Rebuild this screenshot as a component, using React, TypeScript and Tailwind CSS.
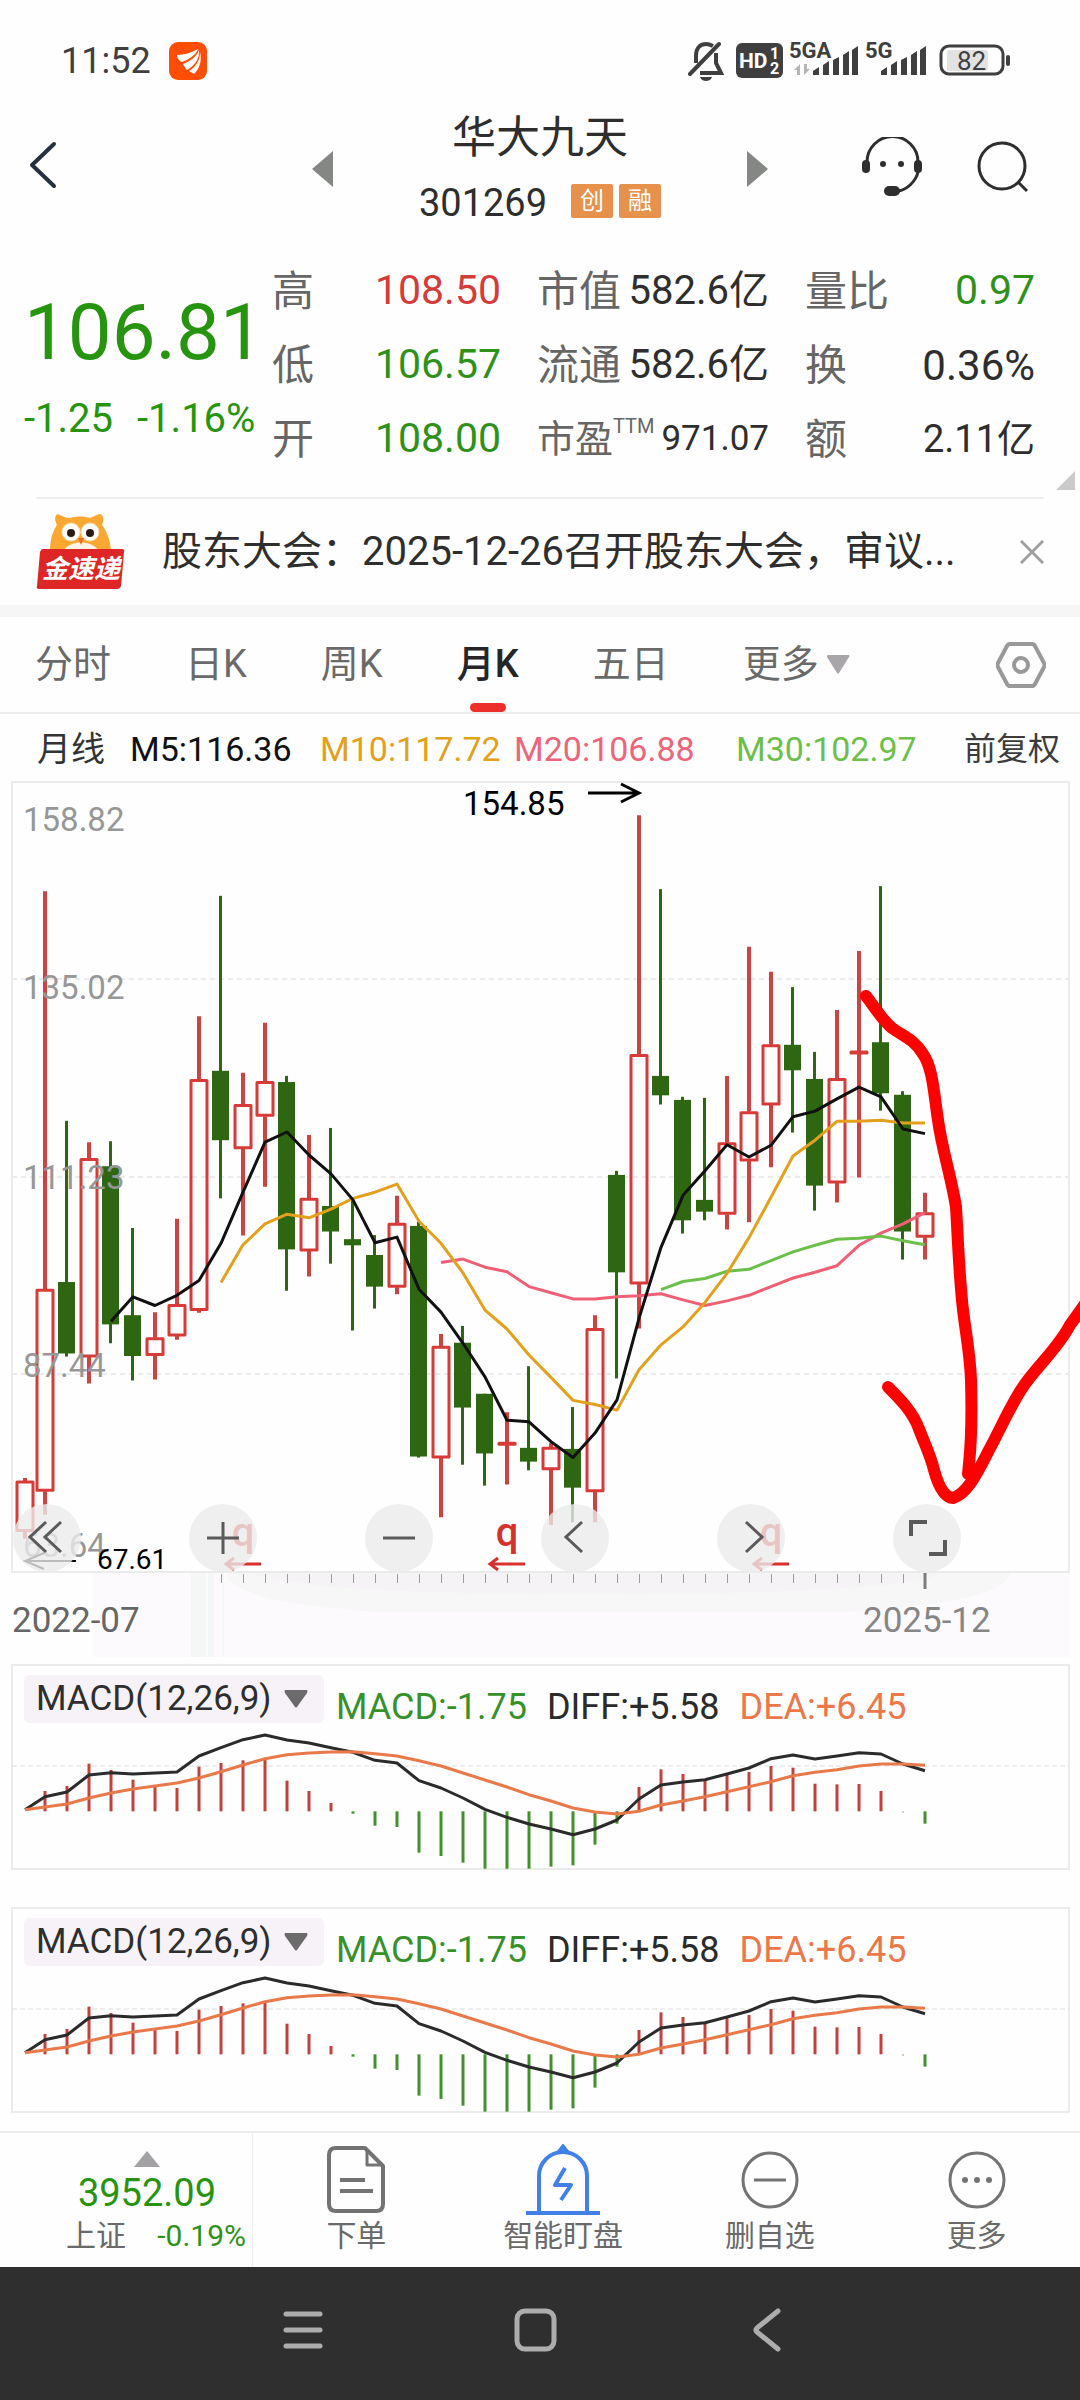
import React from "react";

type Candle = [up: boolean, high: number, top: number, bottom: number, low: number];

/* Candle values are in plot units; PLOT_SCALE turns them into view-box pixels. */
const PLOT_SCALE = 0.5102;

const candles: Candle[] = [
  [true, 1368, 1374, 1473, 1487],
  [true, 218, 998, 1394, 1440],
  [false, 668, 984, 1124, 1130],
  [true, 710, 742, 1131, 1183],
  [false, 708, 757, 1067, 1104],
  [false, 878, 1049, 1129, 1177],
  [true, 1043, 1093, 1128, 1175],
  [true, 860, 1028, 1090, 1097],
  [true, 463, 587, 1040, 1044],
  [false, 227, 570, 706, 820],
  [true, 574, 636, 723, 893],
  [true, 476, 591, 659, 797],
  [false, 580, 592, 920, 1001],
  [true, 696, 820, 923, 973],
  [false, 682, 835, 885, 948],
  [false, 820, 900, 912, 1079],
  [false, 892, 931, 993, 1036],
  [true, 815, 869, 994, 1008],
  [false, 866, 874, 1326, 1328],
  [true, 1086, 1110, 1329, 1445],
  [false, 1070, 1103, 1230, 1342],
  [false, 1203, 1203, 1320, 1383],
  [true, 1239, 1298, 1300, 1381],
  [false, 1149, 1309, 1336, 1353],
  [true, 1300, 1308, 1352, 1460],
  [false, 1229, 1311, 1387, 1455],
  [true, 1049, 1075, 1395, 1455],
  [false, 766, 774, 965, 1173],
  [true, 69, 538, 988, 1075],
  [false, 214, 580, 618, 636],
  [false, 621, 627, 863, 889],
  [false, 623, 823, 846, 863],
  [true, 580, 711, 851, 881],
  [true, 327, 650, 747, 867],
  [true, 376, 519, 637, 759],
  [false, 406, 519, 569, 691],
  [false, 533, 586, 795, 844],
  [true, 451, 585, 790, 828],
  [true, 335, 531, 537, 779],
  [false, 208, 514, 614, 648],
  [false, 610, 617, 885, 940],
  [true, 809, 848, 896, 940],
];

const averages = [
  {
    color: "#ef6076",
    start: 19,
    values: [946, 939, 955, 964, 993, 1005, 1017, 1017, 1013, 1011, 1007, 1019, 1030, 1021, 1010, 993, 976, 965, 952, 912, 888, 870, 848],
  },
  {
    color: "#6cbf4b",
    start: 29,
    values: [999, 983, 977, 963, 959, 942, 925, 912, 900, 898, 894, 903, 911],
  },
  {
    color: "#e2a01c",
    start: 9,
    values: [985, 911, 870, 851, 858, 841, 820, 808, 792, 865, 908, 966, 1039, 1076, 1127, 1171, 1216, 1224, 1235, 1156, 1107, 1072, 1024, 967, 897, 818, 737, 706, 669, 669, 667, 672, 672],
  },
  {
    color: "#111111",
    start: 4,
    values: [1061, 1013, 1030, 1010, 981, 908, 808, 710, 690, 735, 772, 823, 907, 896, 998, 1043, 1104, 1170, 1255, 1258, 1297, 1328, 1280, 1215, 1055, 916, 814, 766, 715, 739, 716, 660, 649, 625, 602, 621, 684, 693],
  },
];

const macdBars = [
  484, 423, 408, 341, 360, 389, 408, 414, 350, 339, 331, 330, 392, 423, 459, 491, 527, 531, 608, 618, 638, 656, 656, 656, 650, 646, 584, 521, 411, 358, 372, 390, 375, 366, 348, 353, 401, 403, 402, 423, 488, 521,
];
const diffLine = [
  479, 440, 426, 375, 368, 372, 369, 366, 318, 293, 269, 255, 270, 279, 293, 307, 331, 339, 392, 414, 444, 478, 502, 522, 537, 554, 537, 510, 447, 405, 396, 389, 372, 354, 326, 315, 327, 318, 308, 312, 342, 362,
];
const deaLine = [
  479, 471, 462, 444, 429, 417, 408, 399, 384, 365, 345, 326, 314, 309, 306, 305, 311, 318, 332, 348, 369, 390, 411, 434, 453, 474, 486, 492, 484, 465, 453, 440, 425, 410, 395, 377, 367, 359, 348, 342, 342, 346,
];

const slotX = (i: number) => (i === 0 ? 25 : 23 + 22 * i);
const plotY = (v: number) => v * PLOT_SCALE;
const macdY = (v: number) => v / 3 - 7;

function linePoints(values: number[], start: number, scale: (v: number) => number) {
  return values.map((v, i) => `${slotX(start + i)},${scale(v).toFixed(1)}`).join(" ");
}

function SignalBars() {
  return (
    <>
      <path d="M0 29v-4l6-4v8z" />
      <path d="M10 29v-10l6-4v14z" />
      <path d="M20 29v-15l6-3v18z" />
      <path d="M30 29v-20l6-4v24z" />
      <path d="M39 29v-25l6-4v29z" />
    </>
  );
}

function StatusBar() {
  return (
    <div className="flex items-center justify-between pt-[34px] pr-[68px] pl-[61px] text-[#3f3f3f]">
      <div className="flex items-center gap-[18px]">
        <span className="text-[36px] leading-10">11:52</span>
        <svg width="38" height="38" viewBox="0 0 38 38" aria-hidden="true">
          <rect width="38" height="38" rx="9" fill="#ff4d05" />
          <path d="M8 13C15 13 24 10 29 7C27 13 19 18 13 20C10 19 8 16 8 13z" fill="#fff" />
          <path d="M14 22C22 19 28 14 30 8C31 17 25 24 18 28C16 26 15 24 14 22z" fill="#fff" />
          <path d="M20 29C27 25 31 18 31 10C33 18 31 26 25 32z" fill="#fff" />
        </svg>
      </div>
      <svg width="324" height="54" viewBox="688 33 324 54" fill="#3f3f3f" fontFamily="Roboto, sans-serif" aria-hidden="true">
        <g fill="none" stroke="#3f3f3f" strokeWidth="4">
          <path d="M690 73L719 43" strokeLinecap="round" />
          <path d="M696 62V55C696 46 701 43 706 43C709 43 711 44 713 45" />
          <path d="M716 52V62L721 72H700" />
        </g>
        <path d="M700 76h12c-1 3-4 4-6 4s-5-1-6-4z" />
        <rect x="736" y="42" width="47" height="35" rx="6" />
        <text x="739" y="67" fontSize="21" fontWeight="700" fill="#fff">HD</text>
        <text x="770" y="58" fontSize="16" fontWeight="700" fill="#fff">1</text>
        <text x="770" y="73" fontSize="16" fontWeight="700" fill="#fff">2</text>
        <text x="789" y="57" fontSize="22" fontWeight="700">5GA</text>
        <g fill="#b5b5b5">
          <path d="M794 69l6-6v11h-3v-5z" />
          <path d="M804 63v11l6-6h-3v-5z" />
        </g>
        <g transform="translate(813 45)"><SignalBars /></g>
        <text x="865" y="57" fontSize="22" fontWeight="700">5G</text>
        <g transform="translate(881 45)"><SignalBars /></g>
        <rect x="941" y="45" width="62" height="28" rx="8" fill="none" stroke="#3f3f3f" strokeWidth="3" />
        <rect x="947" y="49" width="41" height="21" rx="3" fill="#e2e2e2" />
        <rect x="1006" y="54" width="4" height="11" rx="2" />
        <text x="957" y="69" fontSize="26">82</text>
      </svg>
    </div>
  );
}

function Header() {
  return (
    <header className="grid grid-cols-[1fr_456px_1fr] items-center pt-[22px] text-[#2e2e2e]">
      <div className="flex pl-7">
        <button type="button" aria-label="返回" className="pb-2">
          <svg width="30" height="48" viewBox="0 0 30 48" fill="none" stroke="#26303f" strokeWidth="4">
            <path d="M26 3L4 24L26 45" strokeLinecap="round" strokeLinejoin="round" />
          </svg>
        </button>
      </div>
      <div className="flex items-center justify-between">
        <button type="button" aria-label="上一只">
          <svg width="21" height="36" viewBox="0 0 21 36"><path d="M21 0V36L0 18z" fill="#848783" /></svg>
        </button>
        <div className="flex flex-col items-center gap-3">
          <h1 className="text-[44px] leading-[56px]">华大九天</h1>
          <div className="flex items-center gap-6">
            <span className="text-[38px] leading-[50px]">301269</span>
            <span className="flex gap-[6px] pb-1 text-[24px] leading-[34px] text-white">
              <span className="rounded-xs bg-[#e6914c] px-[9px]">创</span>
              <span className="rounded-xs bg-[#e6914c] px-[9px]">融</span>
            </span>
          </div>
        </div>
        <button type="button" aria-label="下一只">
          <svg width="21" height="36" viewBox="0 0 21 36"><path d="M0 0V36L21 18z" fill="#848783" /></svg>
        </button>
      </div>
      <div className="flex items-center justify-end gap-[54px] pr-[51px] pb-1">
        <button type="button" aria-label="客服">
          <svg width="62" height="60" viewBox="861 137 62 60" fill="#2e2e2e">
            <path d="M867 162A25 25 0 0 1 918 162V172C916 181 907 190 898 191" fill="none" stroke="#2e2e2e" strokeWidth="3" />
            <rect x="862" y="160" width="8" height="13" rx="4" />
            <rect x="914" y="160" width="8" height="13" rx="4" />
            <circle cx="883" cy="164" r="3" />
            <circle cx="901" cy="164" r="3" />
            <rect x="884" y="186" width="16" height="10" rx="5" />
          </svg>
        </button>
        <button type="button" aria-label="搜索">
          <svg width="52" height="52" viewBox="976 140 52 52" fill="none" stroke="#2e2e2e" strokeWidth="3">
            <circle cx="1001" cy="165" r="23" />
            <path d="M1017 181L1026 190" />
          </svg>
        </button>
      </div>
    </header>
  );
}

function Stat({ label, value, tone }: { label: React.ReactNode; value: string; tone: string }) {
  return (
    <div className="flex h-[74px] items-center justify-between whitespace-nowrap">
      <dt className="text-[42px] text-[#666666]">{label}</dt>
      <dd className={tone}>{value}</dd>
    </div>
  );
}

function Quote() {
  return (
    <section className="relative pt-[26px] pb-[21px]">
      <div className="grid grid-cols-[248fr_265fr_268fr_230fr] pr-[45px] pl-6">
        <div className="flex min-w-0 flex-col justify-center gap-2 whitespace-nowrap text-[#279410]">
          <p className="text-[78px] leading-[100px]">106.81</p>
          <p className="flex gap-[24px] text-[40px] leading-[56px]">
            <span>-1.25</span>
            <span>-1.16%</span>
          </p>
        </div>
        <dl className="pr-9">
          <Stat label="高" value="108.50" tone="text-[41px] text-[#d43c39]" />
          <Stat label="低" value="106.57" tone="text-[41px] text-[#2f901a]" />
          <Stat label="开" value="108.00" tone="text-[41px] text-[#2f901a]" />
        </dl>
        <dl className="pr-9">
          <Stat label="市值" value="582.6亿" tone="text-[40px] text-[#2e2e2e]" />
          <Stat label="流通" value="582.6亿" tone="text-[40px] text-[#2e2e2e]" />
          <Stat
            label={<span className="flex text-[38px]">市盈<span className="text-[20px]">TTM</span></span>}
            value="971.07"
            tone="text-[35px] text-[#2e2e2e]"
          />
        </dl>
        <dl>
          <Stat label="量比" value="0.97" tone="text-[41px] text-[#2f901a]" />
          <Stat label="换" value="0.36%" tone="text-[42px] text-[#2e2e2e]" />
          <Stat label="额" value="2.11亿" tone="text-[38px] text-[#2e2e2e]" />
        </dl>
      </div>
      <svg className="absolute right-[5px] bottom-[7px]" width="19" height="19" viewBox="0 0 19 19" aria-hidden="true">
        <path d="M19 0V19H0z" fill="#cbcbcb" />
      </svg>
    </section>
  );
}

function News() {
  return (
    <section className="mx-9 flex h-[108px] items-center border-t-2 border-[#efefef]">
      <svg className="shrink-0" width="90" height="80" viewBox="36 512 90 80" aria-hidden="true">
        <path d="M50 553C50 535 55 528 57 525C54 519 55 515 58 514C62 516 66 518 70 518C76 516 85 516 90 518C95 516 98 514 101 514C104 517 104 521 102 525C106 530 111 540 111 553z" fill="#fba833" />
        <path d="M64 550C70 540 92 540 98 550z" fill="#fdf4e6" />
        <circle cx="71" cy="532" r="9" fill="#fff" stroke="#f5dcae" strokeWidth="1" />
        <circle cx="90" cy="532" r="9" fill="#fff" stroke="#f5dcae" strokeWidth="1" />
        <circle cx="71" cy="533" r="4" fill="#2b1a12" />
        <circle cx="90" cy="533" r="4" fill="#2b1a12" />
        <path d="M78 538L81 545L84 538z" fill="#e9722a" />
        <path d="M43 549H122Q125 549 124 552L121 586Q120 589 117 589H39Q36 589 37 586L40 552Q41 549 43 549z" fill="#de2626" />
        <text x="42" y="578" fontSize="26" fontWeight="700" fontStyle="italic" fill="#fff" fontFamily="'Noto Sans CJK SC', sans-serif">金速递</text>
      </svg>
      <p className="ml-9 min-w-0 flex-1 truncate text-[40px] text-[#2e2e2e]">股东大会：2025-12-26召开股东大会，审议...</p>
      <button type="button" aria-label="关闭">
        <svg width="24" height="24" viewBox="0 0 24 24" stroke="#a0a0a0" strokeWidth="3"><path d="M1 1L23 23M23 1L1 23" /></svg>
      </button>
    </section>
  );
}

function Tabs() {
  const tabs = ["分时", "日K", "周K", "月K", "五日"];
  return (
    <nav className="flex h-[97px] items-stretch justify-between border-b-2 border-[#ececec] pr-[34px] pl-[35px] text-[38px] text-[#6a6a6a]">
      <div className="flex gap-[74px]">
        {tabs.map((t) => (
          <button
            key={t}
            type="button"
            className={t === "月K" ? "relative font-medium whitespace-nowrap text-[#262626]" : "whitespace-nowrap"}
          >
            {t}
            {t === "月K" && <span className="absolute bottom-0 left-1/2 h-[9px] w-9 -translate-x-1/2 rounded-full bg-[#ed2f2b]" />}
          </button>
        ))}
        <button type="button" className="flex items-center gap-2 whitespace-nowrap">
          更多
          <svg width="23" height="19" viewBox="0 0 23 19"><path d="M1 0H22Q23 1 22 2L12 18Q11 19 10 18L0 2Q0 0 1 0z" fill="#a8a6a8" /></svg>
        </button>
      </div>
      <button type="button" aria-label="设置">
        <svg width="50" height="46" viewBox="0 0 50 46" fill="none" stroke="#999999" strokeWidth="4">
          <path d="M14 2H36Q38 2 39 4L48 21Q49 23 48 25L39 42Q38 44 36 44H14Q12 44 11 42L2 25Q1 23 2 21L11 4Q12 2 14 2z" />
          <circle cx="25" cy="23" r="7" />
        </svg>
      </button>
    </nav>
  );
}

function AverageLegend() {
  return (
    <div className="flex h-[66px] items-center pt-1 pr-5 pl-[37px] text-[34px] whitespace-nowrap">
      <span className="w-[93px] text-[#333333]">月线</span>
      <span className="w-[190px] text-[#111111]">M5:116.36</span>
      <span className="w-[194px] text-[#e2a01c]">M10:117.72</span>
      <span className="w-[222px] text-[#ec657b]">M20:106.88</span>
      <span className="text-[#6cbf4b]">M30:102.97</span>
      <button type="button" className="ml-auto text-[32px] text-[#3c3c3c]">前复权</button>
    </div>
  );
}

const controls: { name: string; art: React.ReactNode }[] = [
  { name: "最早", art: <path d="M33 18L17 33L33 48M48 18L32 33L48 48" /> },
  { name: "放大", art: <path d="M18 34H50M34 18V50" strokeWidth="3" /> },
  { name: "缩小", art: <path d="M18 34H50" strokeWidth="3" /> },
  { name: "向左", art: <path d="M41 18L25 33L41 48" /> },
  { name: "向右", art: <path d="M29 18L45 33L29 48" /> },
  { name: "全屏", art: <path d="M18 32V18H34M36 50H52V36" strokeWidth="4" /> },
];

function CandleChart() {
  return (
    <section className="relative">
      <svg className="block w-full" viewBox="0 0 1080 877" fontFamily="Roboto, sans-serif" role="img" aria-label="月K线图">
        <rect x="93" y="793" width="977" height="84" fill="#fdfafe" />
        <path d="M191 793H1010C1004 812 960 826 840 832H380C300 828 250 818 228 800V793z" fill="#f6f7f6" />
        <path d="M250 793H940C925 806 800 814 600 814C430 814 300 810 250 793z" fill="#f6f3f6" />
        <path d="M191 793h15v84h-15zM208 793h6v84h-6zM222 793h2v84h-2z" fill="#f5f7f6" />
        <path d="M12 2H1069V792H12z" fill="none" stroke="#ebebeb" strokeWidth="2" />
        <g stroke="#ebebeb" strokeWidth="2" strokeDasharray="5 4">
          <path d="M12 199H1069M12 397H1069M12 594H1069" />
        </g>
        {candles.map(([up, high, top, bottom, low], i) => {
          const x = slotX(i);
          return up ? (
            <g key={i} stroke="#d63b37" fill="none">
              <path d={`M${x} ${plotY(high)}V${plotY(top)}M${x} ${plotY(bottom)}V${plotY(low)}`} strokeWidth="4" stroke="#cb4440" />
              <rect x={x - 8} y={plotY(top) + 1} width="16" height={Math.max(plotY(bottom - top) - 2, 1)} strokeWidth="3" strokeLinejoin="round" />
            </g>
          ) : (
            <g key={i} fill="#2f6611">
              <rect x={x - 2} y={plotY(high)} width="3" height={plotY(low - high)} />
              <rect x={x - 9} y={plotY(top)} width="17" height={plotY(bottom - top)} />
            </g>
          );
        })}
        <g fill="#979797" fontSize="33">
          <text x="23" y="51">158.82</text>
          <text x="23" y="219">135.02</text>
          <text x="23" y="409">111.23</text>
          <text x="23" y="597">87.44</text>
          <text x="23" y="777">63.64</text>
        </g>
        {averages.map((a) => (
          <polyline key={a.color} points={linePoints(a.values, a.start, plotY)} fill="none" stroke={a.color} strokeWidth="3" strokeLinejoin="round" />
        ))}
        <g fill="none" stroke="#000" strokeWidth="3">
          <path d="M588 13H639M621 4L639 13L621 22" />
          <path d="M76 781H25M44 773L25 781L44 789" strokeWidth="2" />
        </g>
        <text x="463" y="35" fontSize="33" fill="#000">154.85</text>
        <text x="97" y="789" fontSize="28" fill="#000">67.61</text>
        {[243, 507, 771].map((x) => (
          <g key={x}>
            <text x={x} y="766" fontSize="40" fontWeight="500" textAnchor="middle" fill="#d6302f">q</text>
            <path d={`M${x + 18} 784H${x - 17}M${x - 9} 778L${x - 17} 784L${x - 9} 790`} fill="none" stroke="#d6302f" strokeWidth="3" />
          </g>
        ))}
        <g stroke="#9d9d9d" strokeWidth="1">
          {Array.from({ length: 32 }, (_, i) => (
            <path key={i} d={`M${221 + 22 * i}.5 794v9`} />
          ))}
        </g>
        <path d="M925 793v16" stroke="#7d7d7d" strokeWidth="3" />
        <g fontSize="35">
          <text x="12" y="852" fill="#666666">2022-07</text>
          <text x="863" y="852" fill="#868686">2025-12</text>
        </g>
        <g fill="none" stroke="#ff0000" strokeWidth="12" strokeLinecap="round" strokeLinejoin="round">
          <path d="M866 216C874 226 882 240 892 248C903 256 915 260 923 274C933 288 934 315 938 340C942 370 951 395 956 427C958 460 959 490 962 520C964 545 970 570 971 600C972 635 971 665 969 684L968 694" />
          <path d="M888 607C900 619 913 632 919 649C926 667 931 677 934 690C940 712 947 718 953 718C966 714 975 698 989 670C1001 648 1012 622 1025 604C1040 583 1058 568 1070 545L1088 520" />
        </g>
      </svg>
      <div className="absolute inset-x-0 bottom-[85px] flex justify-between pr-[119px] pl-[13px]">
        {controls.map((c) => (
          <button key={c.name} type="button" aria-label={c.name} className="size-[68px] rounded-full bg-[#ebebeb]/80">
            <svg viewBox="0 0 68 68" fill="none" stroke="#5a5a5a" strokeWidth="3">{c.art}</svg>
          </button>
        ))}
      </div>
    </section>
  );
}

function MacdPanel() {
  return (
    <section className="relative">
      <svg className="block w-full" viewBox="0 0 1080 219" role="img" aria-label="MACD指标">
        <path d="M12 8H1069V212H12z" fill="none" stroke="#ebebeb" strokeWidth="2" />
        <path d="M12 109H1069" stroke="#dcdcdc" strokeWidth="1" strokeDasharray="5 3" />
        {macdBars.map((v, i) => (
          <path key={i} d={`M${slotX(i)} ${macdY(484)}V${macdY(v)}`} stroke={v < 484 ? "#c4403d" : "#43902f"} strokeWidth={i === 40 ? 1 : 3} />
        ))}
        <polyline points={linePoints(diffLine, 0, macdY)} fill="none" stroke="#2b2b2b" strokeWidth="3" strokeLinejoin="round" />
        <polyline points={linePoints(deaLine, 0, macdY)} fill="none" stroke="#e8794a" strokeWidth="3" strokeLinejoin="round" />
      </svg>
      <div className="absolute inset-x-6 top-[18px] flex items-start gap-3 whitespace-nowrap">
        <button type="button" aria-haspopup="listbox" className="flex h-12 w-[300px] items-center justify-between rounded-md bg-[#f6f2f7] pr-4 pl-3 text-[35px] text-[#2e2e2e]">
          MACD(12,26,9)
          <svg width="24" height="18" viewBox="0 0 24 18"><path d="M1 0H23Q24 1 23 3L13 17Q12 18 11 17L1 3Q0 1 1 0z" fill="#6b6b6b" /></svg>
        </button>
        <div className="flex gap-5 pt-2 text-[36px] leading-12">
          <span className="text-[#37912a]">MACD:-1.75</span>
          <span className="text-[#2b2b2b]">DIFF:+5.58</span>
          <span className="text-[#ec774a]">DEA:+6.45</span>
        </div>
      </div>
    </section>
  );
}

const actions: { label: string; art: React.ReactNode }[] = [
  {
    label: "下单",
    art: (
      <g stroke="#737373" strokeWidth="4" strokeLinejoin="round">
        <path d="M17 4H46L64 22V60Q64 67 57 67H17Q10 67 10 60V11Q10 4 17 4z" />
        <path d="M48 5V21H63" strokeWidth="3" />
        <path d="M21 36H46M21 47H54" />
      </g>
    ),
  },
  {
    label: "智能盯盘",
    art: (
      <g stroke="#4080e8" strokeWidth="4">
        <path d="M13 68V32A24 24 0 0 1 61 32V68" />
        <path d="M0 69H74" />
        <path d="M33 6L37 1L41 6z" fill="#4080e8" strokeWidth="2" />
        <path d="M39 24L29 41H45L35 56" strokeWidth="4" strokeLinejoin="round" />
      </g>
    ),
  },
  {
    label: "删自选",
    art: (
      <g stroke="#737373" strokeWidth="3">
        <circle cx="37" cy="36" r="27" />
        <path d="M21 36H53" />
      </g>
    ),
  },
  {
    label: "更多",
    art: (
      <g>
        <circle cx="37" cy="36" r="27" stroke="#737373" strokeWidth="3" />
        <g fill="#737373">
          <circle cx="25" cy="36" r="3" />
          <circle cx="37" cy="36" r="3" />
          <circle cx="49" cy="36" r="3" />
        </g>
      </g>
    ),
  },
];

function ActionBar() {
  return (
    <footer className="mt-3 flex h-[136px] border-t-2 border-[#ededed]">
      <button type="button" className="flex w-[253px] flex-col items-center border-r border-[#ededed] pt-[18px] pl-[42px]">
        <svg width="26" height="16" viewBox="0 0 26 16"><path d="M13 0L26 16H0z" fill="#a3a1a4" /></svg>
        <span className="text-[38px] leading-[52px] text-[#279410]">3952.09</span>
        <span className="flex w-full items-center justify-between pr-[6px] pl-6 text-[30px] leading-[34px] whitespace-nowrap">
          <span className="text-[#6a6a6a]">上证</span>
          <span className="text-[#2f901a]">-0.19%</span>
        </span>
      </button>
      {actions.map((a) => (
        <button key={a.label} type="button" className="flex flex-1 flex-col items-center pt-[11px] text-[30px] leading-10 text-[#6a6a6a]">
          <svg width="74" height="72" viewBox="0 0 74 72" fill="none">{a.art}</svg>
          {a.label}
        </button>
      ))}
    </footer>
  );
}

function SystemNav() {
  return (
    <nav className="flex bg-[#2f2f2f] pt-[41px] pr-[197px] pb-[48px] pl-[187px]">
      <button type="button" aria-label="最近任务" className="flex flex-1 justify-center">
        <svg width="42" height="44" viewBox="0 0 42 44" stroke="#adadad" strokeWidth="5" strokeLinecap="round"><path d="M4 6H38M4 22H38M4 38H38" /></svg>
      </button>
      <button type="button" aria-label="主屏幕" className="flex flex-1 justify-center">
        <svg width="44" height="44" viewBox="0 0 44 44" fill="none" stroke="#adadad" strokeWidth="5"><rect x="4" y="3" width="37" height="38" rx="8" /></svg>
      </button>
      <button type="button" aria-label="后退" className="flex flex-1 justify-center">
        <svg width="30" height="44" viewBox="0 0 30 44" fill="none" stroke="#adadad" strokeWidth="5" strokeLinecap="round" strokeLinejoin="round"><path d="M26 3L5 20Q3 22 5 24L26 41" /></svg>
      </button>
    </nav>
  );
}

export default function App() {
  return (
    <main className="overflow-x-hidden bg-[#fefefe] font-['Roboto','Noto_Sans_CJK_SC',sans-serif]">
      <StatusBar />
      <Header />
      <Quote />
      <News />
      <div className="h-3 bg-[#f6f6f6]" />
      <Tabs />
      <AverageLegend />
      <CandleChart />
      <div className="flex flex-col gap-6">
        <MacdPanel />
        <MacdPanel />
      </div>
      <ActionBar />
      <SystemNav />
    </main>
  );
}
